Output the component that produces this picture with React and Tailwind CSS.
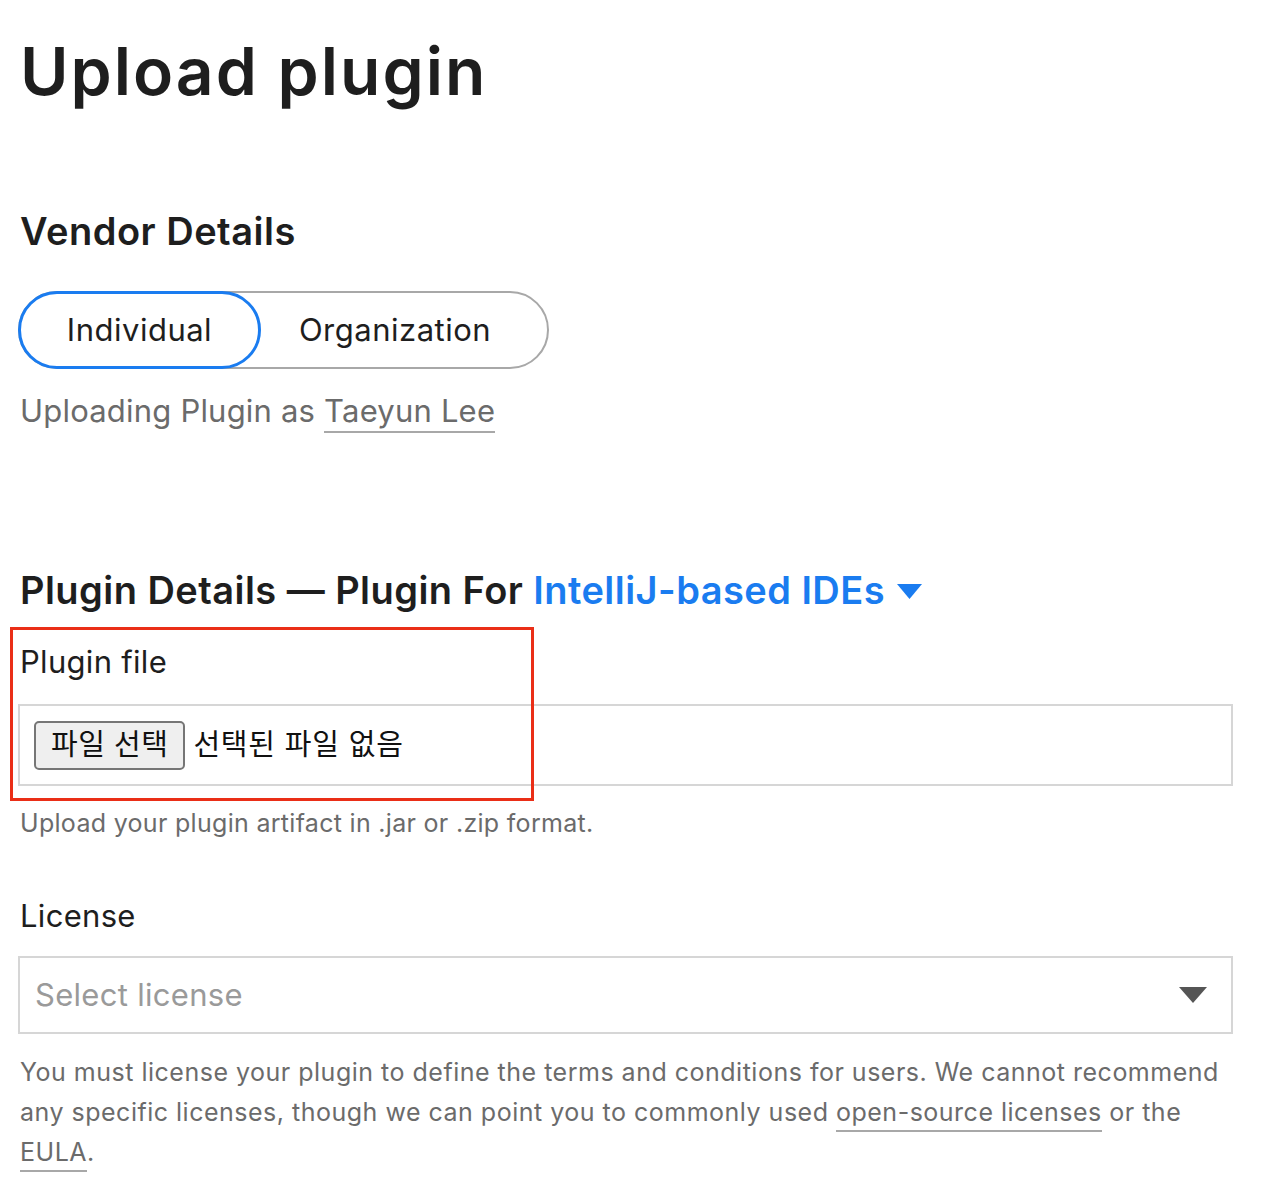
import React from "react";

export default function App() {
    return (
        <div className="w-[1266px] min-h-[1192px] bg-white text-[#1e1e1e] font-['Inter','Noto_Sans_CJK_KR',sans-serif] px-5 pt-[27px]">
            {/* Title */}
            <h1 className="text-[66px] leading-[88px] font-semibold tracking-[2px]">Upload plugin</h1>

            {/* Vendor */}
            <h2 className="mt-[94px] text-[38px] leading-[44px] font-semibold tracking-[0.5px]">Vendor Details</h2>

            <div className="mt-[38px] flex w-[531px] h-[78px] rounded-full border-2 border-[#a8a8a8] -ml-[2px]">
                <button className="w-[243px] h-[78px] -my-[2px] -ml-[2px] rounded-full border-[3px] border-[#1a7cf0] text-[31px] tracking-[0.5px] text-[#1e1e1e]">
                    Individual
                </button>
                <button className="flex-1 text-[31px] tracking-[0.5px] text-[#1e1e1e] pr-[18px]">Organization</button>
            </div>

            <p className="mt-[20px] text-[31px] leading-[44px] tracking-[0.2px] text-[#6b6b6b]">
                Uploading Plugin as{" "}
                <span className="border-b-2 border-[#a8a8a8] pb-[2px]">Taeyun Lee</span>
            </p>

            {/* Plugin details */}
            <h2 className="mt-[135px] text-[38px] leading-[44px] font-semibold tracking-[0.45px] flex items-center">
                Plugin Details — Plugin For&nbsp;
                <span className="text-[#1a7cf0]">IntelliJ-based IDEs</span>
                <svg className="ml-[12px] mt-[2px]" width="25" height="15" viewBox="0 0 25 15">
                    <polygon points="0,0 25,0 12.5,15" fill="#1a7cf0" />
                </svg>
            </h2>

            <div className="relative mt-[16px]">
                {/* highlight box */}
                <div className="absolute -left-[10px] -top-[1px] w-[524px] h-[174px] border-[3px] border-[#ea2e17] pointer-events-none" />
                <label className="block pt-[14px] text-[31px] leading-[40px] tracking-[0.3px]">Plugin file</label>
                <div className="mt-[22px] -ml-[2px] w-[1215px] h-[82px] border-2 border-[#d6d6d6] flex items-center pl-[14px]">
                    <span className="h-[49px] px-[15px] flex items-center bg-[#efefef] border-2 border-[#767676] rounded-[5px] text-[29px] tracking-[0.5px] text-[#111]">
                        파일 선택
                    </span>
                    <span className="ml-[8px] text-[29px] tracking-[0.8px] text-[#111]">선택된 파일 없음</span>
                </div>
            </div>

            <p className="mt-[22px] text-[25px] leading-[30px] tracking-[0.3px] text-[#6b6b6b]">
                Upload your plugin artifact in .jar or .zip format.
            </p>

            {/* License */}
            <label className="block mt-[58px] text-[31px] leading-[40px] tracking-[0.3px]">License</label>
            <div className="mt-[20px] -ml-[2px] w-[1215px] h-[78px] border-2 border-[#d6d6d6] flex items-center justify-between pl-[15px] pr-[24px]">
                <span className="text-[31px] tracking-[0.3px] text-[#9a9a9a]">Select license</span>
                <svg width="28" height="16" viewBox="0 0 28 16">
                    <polygon points="0,0 28,0 14,16" fill="#555555" />
                </svg>
            </div>

            <p className="mt-[18px] text-[25px] leading-[40px] tracking-[0.5px] text-[#6b6b6b] w-[1215px]">
                You must license your plugin to define the terms and conditions for users. We cannot recommend any specific licenses, though we can point you to commonly used{" "}
                <span className="border-b-2 border-[#a8a8a8] pb-[3px]">open-source licenses</span> or the{" "}
                <span className="border-b-2 border-[#a8a8a8] pb-[3px]">EULA</span>.
            </p>
        </div>
    );
}
